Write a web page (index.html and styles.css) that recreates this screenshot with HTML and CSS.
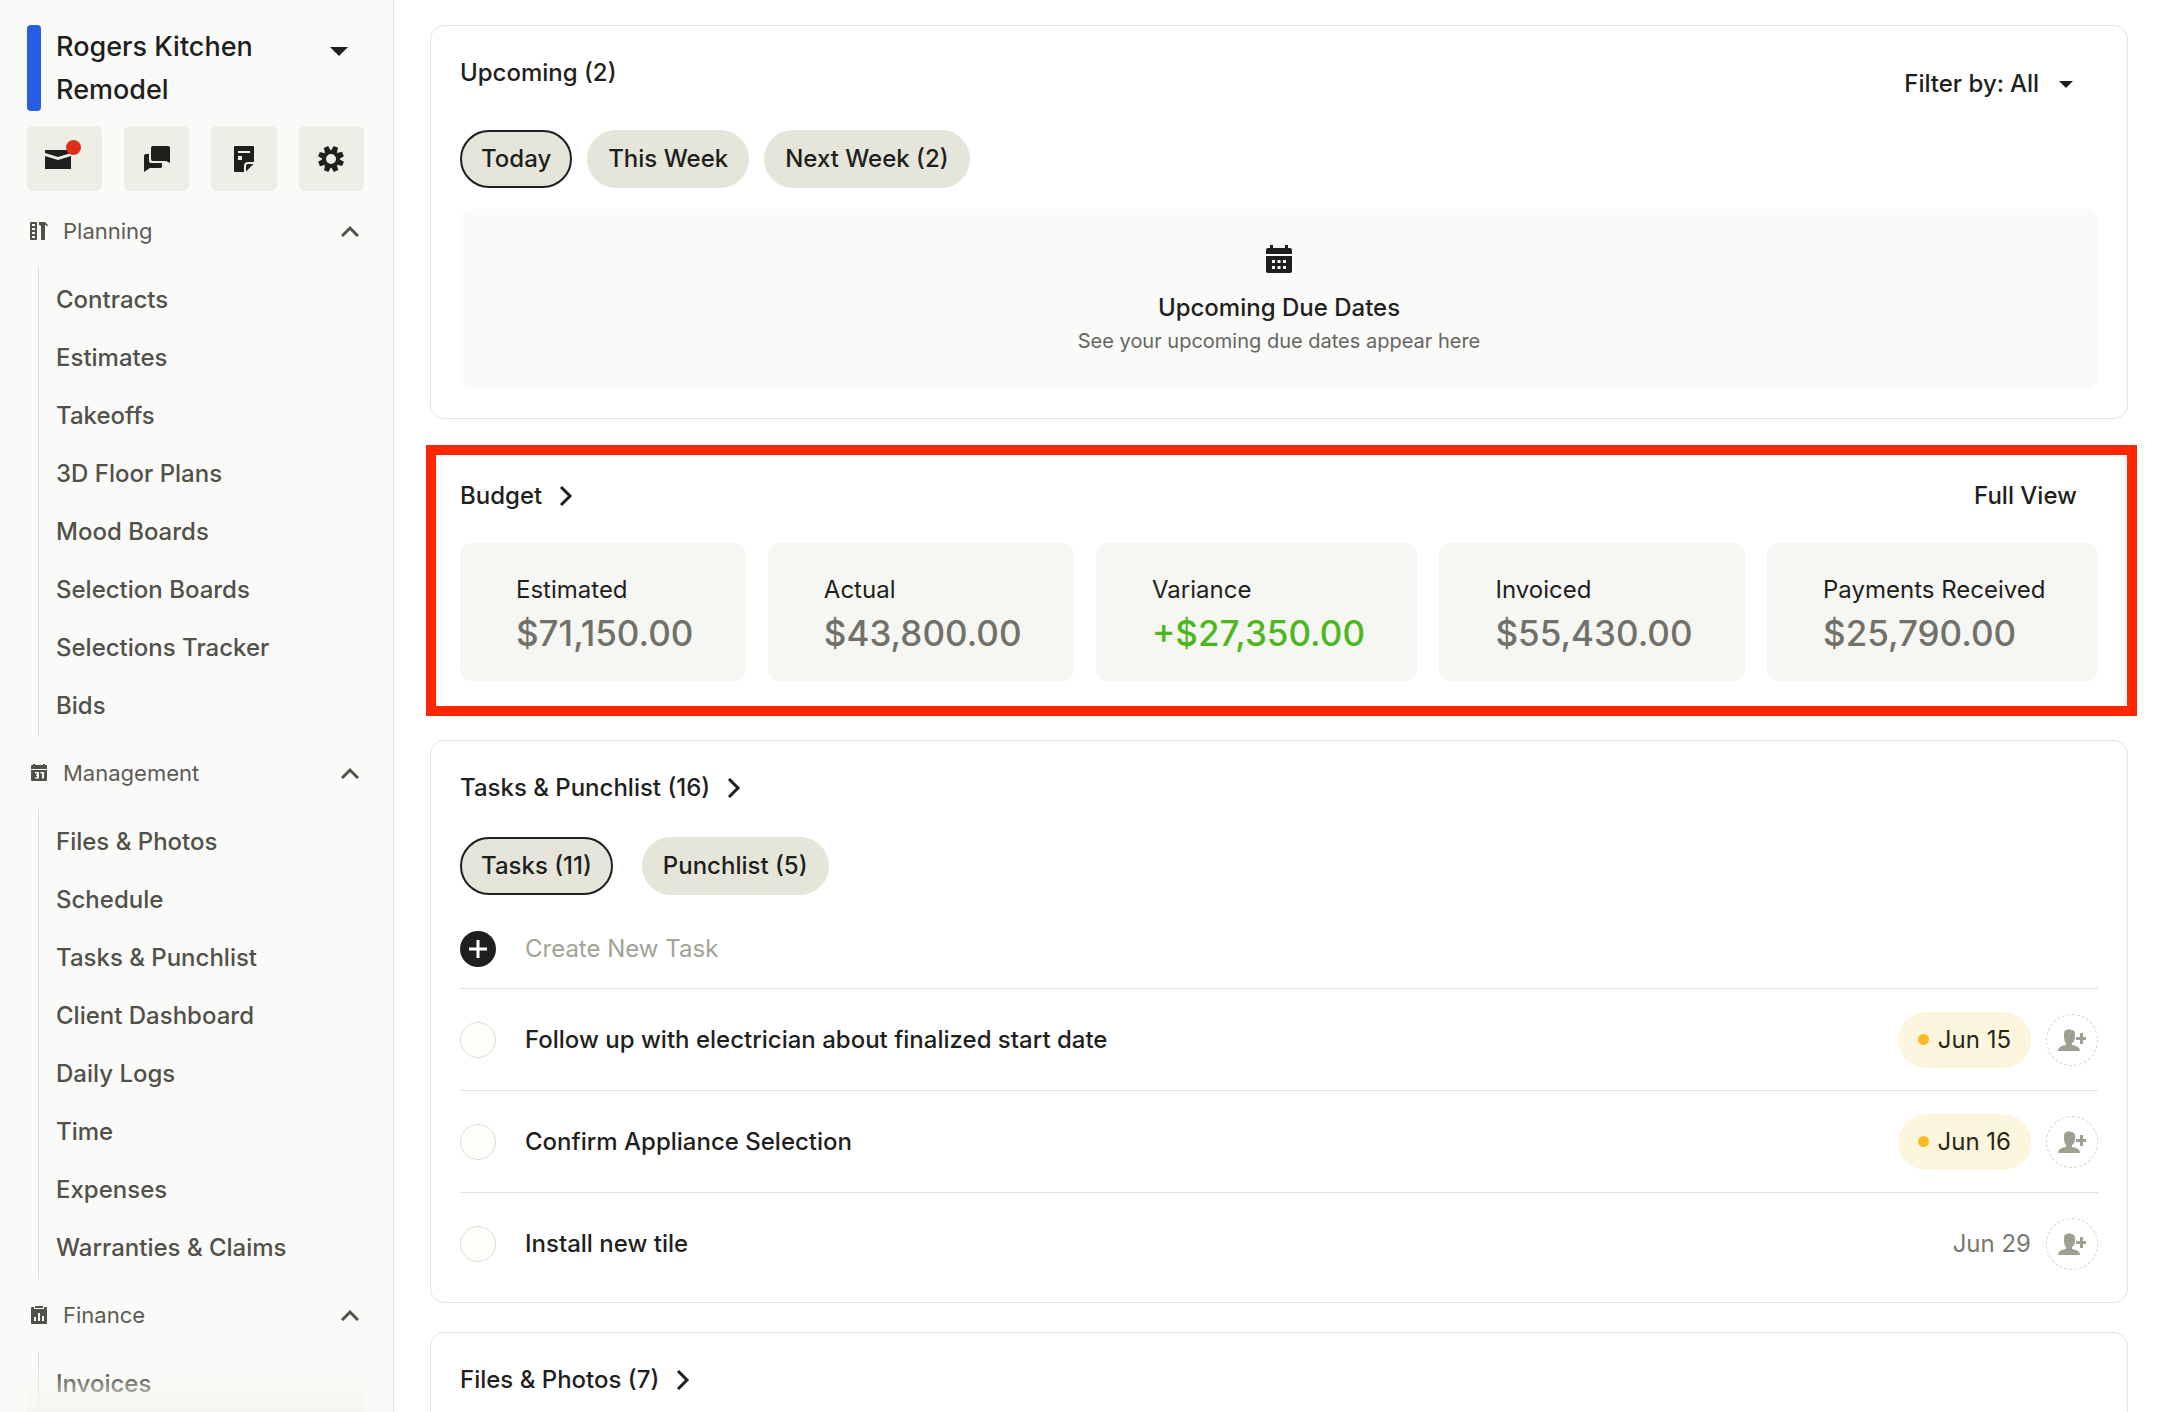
FILE: index.html
```html
<!DOCTYPE html>
<html lang="en">
<head>
    <meta charset="UTF-8">
    <meta name="viewport" content="width=device-width, initial-scale=1.0">
    <title>Rogers Kitchen Remodel</title>
    <link rel="stylesheet" href="styles.css">
</head>
<body>
    <aside class="sidebar">
        <button class="project">
            <span class="project-color"></span>
            <span class="project-name">Rogers Kitchen Remodel</span>
            <svg class="project-caret" width="18" height="10" viewBox="0 0 18 10"><path d="M0 0h18L9 9z"/></svg>
        </button>
        <div class="tools">
            <button class="tool tool-mail" aria-label="Messages">
                <svg width="26" height="26" viewBox="0 0 26 26"><path d="M0 4h26v3l-13 4L0 7z"/><path d="M0 10l13 4 13-4v13H0z"/></svg>
                <span class="badge"></span>
            </button>
            <button class="tool" aria-label="Chat">
                <svg width="26" height="26" viewBox="0 0 26 26"><path d="M9 0h15q2 0 2 2v15l-4-2H9q-2 0-2-2V2q0-2 2-2z"/><path d="M5 8v7q0 2 2 2h11v4q0 1-2 1H6l-6 4V10q0-2 2-2z"/></svg>
            </button>
            <button class="tool" aria-label="Notes">
                <svg width="20" height="26" viewBox="0 0 20 26"><path fill-rule="evenodd" d="M1 0h18q1 0 1 1v15h-6q-4 0-4 4v6H1q-1 0-1-1V1q0-1 1-1zM4 5v2h12V5zM4 10v4h4v-4z"/><path d="M12 25.500V20q0-2 2-2h5.500z"/></svg>
            </button>
            <button class="tool" aria-label="Settings">
                <svg width="26" height="26" viewBox="0 0 26 26"><g id="teeth" transform="rotate(22 13 13)"><path d="M10 5l.6-5h4.800L16 5z" id="tooth"/><use href="#tooth" transform="rotate(45 13 13)"/><use href="#tooth" transform="rotate(90 13 13)"/><use href="#tooth" transform="rotate(135 13 13)"/></g><use href="#teeth" transform="rotate(180 13 13)"/><circle cx="13" cy="13" r="7" fill="none" stroke="#1f1f1d" stroke-width="4"/></svg>
            </button>
        </div>
        <nav>
            <section>
                <button class="nav-head">
                    <svg class="nav-icon" width="18" height="18" viewBox="0 0 18 18"><path fill-rule="evenodd" d="M1 0h5q1 0 1 1v16q0 1-1 1H1q-1 0-1-1V1q0-1 1-1zM2 2v2h3V2zM2 6v2h3V6zM2 10v2h3v-2zM2 14v2h3v-2z"/><path d="M9 0h6l3 3v1l-3-1v15h-4V4L9 3z"/></svg>
                    <span>Planning</span>
                    <svg class="nav-chevron" width="18" height="12" viewBox="0 0 18 12"><path d="M1 11l8-8 8 8"/></svg>
                </button>
                <ul class="nav-list">
                    <li><a href="#">Contracts</a></li>
                    <li><a href="#">Estimates</a></li>
                    <li><a href="#">Takeoffs</a></li>
                    <li><a href="#">3D Floor Plans</a></li>
                    <li><a href="#">Mood Boards</a></li>
                    <li><a href="#">Selection Boards</a></li>
                    <li><a href="#">Selections Tracker</a></li>
                    <li><a href="#">Bids</a></li>
                </ul>
            </section>
            <section>
                <button class="nav-head">
                    <svg class="nav-icon" width="18" height="18" viewBox="0 0 18 18"><path d="M1 5V2q0-1 1-1h1V0h2v1h8V0h2v1h1q1 0 1 1v3z"/><path fill-rule="evenodd" d="M1 6h16v10q0 1-1 1H2q-1 0-1-1zM5 8v1.500h2v1.200H6v1.200h1v1.300H5v1.300h4V8zM10.500 8v1.500H12v5h2V8z"/></svg>
                    <span>Management</span>
                    <svg class="nav-chevron" width="18" height="12" viewBox="0 0 18 12"><path d="M1 11l8-8 8 8"/></svg>
                </button>
                <ul class="nav-list">
                    <li><a href="#">Files &amp; Photos</a></li>
                    <li><a href="#">Schedule</a></li>
                    <li><a href="#">Tasks &amp; Punchlist</a></li>
                    <li><a href="#">Client Dashboard</a></li>
                    <li><a href="#">Daily Logs</a></li>
                    <li><a href="#">Time</a></li>
                    <li><a href="#">Expenses</a></li>
                    <li><a href="#">Warranties &amp; Claims</a></li>
                </ul>
            </section>
            <section>
                <button class="nav-head">
                    <svg class="nav-icon" width="18" height="18" viewBox="0 0 18 18"><path d="M5 0h8v2H5z"/><path fill-rule="evenodd" d="M2 1h2v2h10V1h2q1 0 1 1v15q0 1-1 1H2q-1 0-1-1V2q0-1 1-1zM4 11v4h2v-4zM8 7v8h2V7zM12 10v5h2v-5z"/></svg>
                    <span>Finance</span>
                    <svg class="nav-chevron" width="18" height="12" viewBox="0 0 18 12"><path d="M1 11l8-8 8 8"/></svg>
                </button>
                <ul class="nav-list">
                    <li><a href="#">Invoices</a></li>
                </ul>
            </section>
        </nav>
        <div class="fade"></div>
    </aside>

    <main class="main">
        <section class="card">
            <div class="card-head">
                <h2>Upcoming (2)</h2>
                <div class="filter">
                    <label for="filter">Filter by:</label>
                    <select id="filter">
                        <option>All</option>
                    </select>
                    <svg width="14" height="7" viewBox="0 0 14 7"><path d="M0 0h14L7 7z"/></svg>
                </div>
            </div>
            <div class="tabs">
                <button class="tab active">Today</button>
                <button class="tab">This Week</button>
                <button class="tab">Next Week (2)</button>
            </div>
            <div class="empty">
                <svg width="26" height="28" viewBox="0 0 26 28"><path d="M0 9V5q0-2 2-2h2V0h3v3h12V0h3v3h2q2 0 2 2v4z"/><path fill-rule="evenodd" d="M0 11h26v15q0 2-2 2H2q-2 0-2-2zM6 15v3h3v-3zM11.500 15v3h3v-3zM17 15v3h3v-3zM6 21v3h3v-3zM11.500 21v3h3v-3zM17 21v3h3v-3z"/></svg>
                <h3>Upcoming Due Dates</h3>
                <p>See your upcoming due dates appear here</p>
            </div>
        </section>

        <section class="card budget">
            <div class="card-head">
                <h2>Budget <svg class="more" width="14" height="22" viewBox="0 0 14 22"><path d="M2 2l9 9-9 9"/></svg></h2>
                <a class="full-view" href="#">Full View</a>
            </div>
            <dl class="stats">
                <div class="stat"><dt>Estimated</dt><dd>$71,150.00</dd></div>
                <div class="stat"><dt>Actual</dt><dd>$43,800.00</dd></div>
                <div class="stat"><dt>Variance</dt><dd class="positive">+$27,350.00</dd></div>
                <div class="stat"><dt>Invoiced</dt><dd>$55,430.00</dd></div>
                <div class="stat"><dt>Payments Received</dt><dd>$25,790.00</dd></div>
            </dl>
        </section>

        <section class="card tasks-card">
            <div class="card-head">
                <h2>Tasks &amp; Punchlist (16) <svg class="more" width="14" height="22" viewBox="0 0 14 22"><path d="M2 2l9 9-9 9"/></svg></h2>
            </div>
            <div class="tabs tabs-wide">
                <button class="tab active">Tasks (11)</button>
                <button class="tab">Punchlist (5)</button>
            </div>
            <form class="new-task">
                <button class="add" type="button" aria-label="Add task">
                    <svg width="36" height="36" viewBox="0 0 36 36"><circle cx="18" cy="18" r="18"/><path d="M18 9v18M9 18h18" stroke="#fff" stroke-width="3"/></svg>
                </button>
                <input type="text" placeholder="Create New Task" aria-label="Create New Task">
            </form>
            <ul class="tasks">
                <li class="task">
                    <input type="checkbox" id="task1">
                    <label for="task1">Follow up with electrician about finalized start date</label>
                    <span class="due soon">Jun 15</span>
                    <button class="assign" aria-label="Assign">
                        <svg width="28" height="22" viewBox="0 0 28 22"><path d="M6 5q0-4 3-4l2-1 2 1q4 0 4 4v3q0 4-3 6v2q8 1 8 6H0q0-5 8-6v-2q-2-2-2-6z"/><path d="M22 4h3v4h4v3h-4v4h-3v-4h-4V8h4z"/></svg>
                    </button>
                </li>
                <li class="task">
                    <input type="checkbox" id="task2">
                    <label for="task2">Confirm Appliance Selection</label>
                    <span class="due soon">Jun 16</span>
                    <button class="assign" aria-label="Assign">
                        <svg width="28" height="22" viewBox="0 0 28 22"><path d="M6 5q0-4 3-4l2-1 2 1q4 0 4 4v3q0 4-3 6v2q8 1 8 6H0q0-5 8-6v-2q-2-2-2-6z"/><path d="M22 4h3v4h4v3h-4v4h-3v-4h-4V8h4z"/></svg>
                    </button>
                </li>
                <li class="task">
                    <input type="checkbox" id="task3">
                    <label for="task3">Install new tile</label>
                    <span class="due">Jun 29</span>
                    <button class="assign" aria-label="Assign">
                        <svg width="28" height="22" viewBox="0 0 28 22"><path d="M6 5q0-4 3-4l2-1 2 1q4 0 4 4v3q0 4-3 6v2q8 1 8 6H0q0-5 8-6v-2q-2-2-2-6z"/><path d="M22 4h3v4h4v3h-4v4h-3v-4h-4V8h4z"/></svg>
                    </button>
                </li>
            </ul>
        </section>

        <section class="card">
            <div class="card-head">
                <h2>Files &amp; Photos (7) <svg class="more" width="14" height="22" viewBox="0 0 14 22"><path d="M2 2l9 9-9 9"/></svg></h2>
            </div>
        </section>
    </main>
</body>
</html>
```

FILE: styles.css
```css
* {
    box-sizing: border-box;
}
body {
    display: flex;
    height: 100vh;
    margin: 0;
    overflow: hidden;
    font-family: Inter, "Liberation Sans", sans-serif;
    font-size: 24px;
    line-height: 30px;
    color: #1f1f1d;
    background: #fff;
}
h2, h3, p, ul, dl, dd {
    margin: 0;
    padding: 0;
}
ul {
    list-style: none;
}
a {
    color: inherit;
    text-decoration: none;
}
button, input, select {
    margin: 0;
    padding: 0;
    border: 0;
    background: none;
    font: inherit;
    color: inherit;
}
svg {
    flex: none;
    fill: #1f1f1d;
}

/* sidebar */
.sidebar {
    position: relative;
    flex: none;
    width: 394px;
    padding: 25px 29px 0 27px;
    overflow: hidden;
    background: #fafaf8;
    border-right: 1px solid #e6e6e4;
}
.project {
    display: flex;
    width: 100%;
    text-align: left;
}
.project-color {
    flex: none;
    align-self: stretch;
    width: 14px;
    border-radius: 4px;
    background: #265fe6;
}
.project-name {
    flex: 1;
    padding: 0 32px 0 15px;
    font-size: 27px;
    font-weight: 500;
    line-height: 43px;
}
.project-caret {
    margin: 22px 16px 0 0;
}
.tools {
    display: flex;
    gap: 22px;
    margin-top: 15px;
}
.tool {
    display: flex;
    flex: 1;
    align-items: center;
    justify-content: center;
    height: 65px;
    border-radius: 6px;
    background: #eeeee7;
}
.tool-mail {
    position: relative;
    flex: none;
    width: 75px;
    padding-right: 14px;
}
.badge {
    position: absolute;
    top: 14px;
    left: 39px;
    width: 15px;
    height: 15px;
    border-radius: 50%;
    background: #dc3018;
}
nav {
    margin-top: 4px;
}
.nav-head {
    display: flex;
    align-items: center;
    width: 100%;
    height: 72px;
    padding: 0 5px 0 3px;
    font-size: 22px;
    color: #5c5c55;
}
.nav-head span {
    flex: 1;
    padding-left: 15px;
    text-align: left;
}
.nav-icon {
    fill: #51514a;
}
.nav-chevron {
    fill: none;
    stroke: #51514a;
    stroke-width: 3;
}
.nav-list {
    margin-left: 11px;
    padding: 4px 0 2px 17px;
    border-left: 1px solid #dededa;
    font-weight: 500;
    line-height: 58px;
    color: #51514a;
}
.nav-list a {
    display: block;
}
.fade {
    position: absolute;
    right: 29px;
    bottom: 0;
    left: 27px;
    height: 40px;
    background: linear-gradient(rgba(246, 246, 241, 0), #f6f6f1);
}

/* cards */
.main {
    flex: 1;
    display: flex;
    flex-direction: column;
    gap: 29px;
    min-width: 0;
    padding: 25px 36px 0;
}
.card {
    flex: none;
    padding: 29px;
    border: 1px solid #e4e4e2;
    border-radius: 14px;
}
.card-head {
    display: flex;
    justify-content: space-between;
    height: 36px;
}
h2, h3 {
    font-size: 24px;
    font-weight: 500;
    line-height: 36px;
}
h2 {
    display: flex;
    align-items: center;
    gap: 17px;
}
.more {
    fill: none;
    stroke: #1f1f1d;
    stroke-width: 3;
}
.filter {
    display: flex;
    align-items: center;
    gap: 6px;
    padding: 22px 25px 0 0;
    font-weight: 500;
}
.filter select {
    appearance: none;
}
.filter svg {
    margin-left: 13px;
}
.tabs {
    display: flex;
    gap: 15px;
    margin-top: 39px;
}
.tabs-wide {
    gap: 29px;
    margin-top: 31px;
}
.tab {
    height: 58px;
    padding: 0 19px;
    border: 2px solid #e6e5da;
    border-radius: 29px;
    background: #e6e5da;
    font-weight: 500;
}
.tab.active {
    border-color: #1f1f1d;
}
.empty {
    display: flex;
    flex-direction: column;
    align-items: center;
    margin-top: 21px;
    padding: 36px 20px 33px;
    border-radius: 12px;
    background: #fafaf8;
}
.empty h3 {
    margin-top: 17px;
}
.empty p {
    font-size: 20px;
    color: #66665f;
}

/* budget */
.budget {
    position: relative;
}
.budget::after {
    content: "";
    position: absolute;
    inset: -4px -10px -6px -5px;
    border: 10px solid #ff2600;
    pointer-events: none;
}
.full-view {
    padding-right: 21px;
    font-weight: 500;
    line-height: 36px;
}
.stats {
    display: flex;
    gap: 22px;
    margin-top: 29px;
}
.stat {
    flex: 1 1 auto;
    height: 138px;
    padding: 32px 50px 0 56px;
    border-radius: 12px;
    background: #f6f6f3;
    white-space: nowrap;
}
.stat dd {
    margin-top: 6px;
    font-size: 35px;
    font-weight: 500;
    line-height: 44px;
    color: #71716a;
}
.stat .positive {
    color: #4db81e;
}

/* tasks */
.tasks-card {
    padding-bottom: 7px;
}
.new-task {
    display: flex;
    align-items: center;
    gap: 29px;
    height: 94px;
    padding-top: 14px;
    border-bottom: 1px solid #e2e2e0;
}
.add {
    display: flex;
}
.new-task input {
    flex: 1;
    outline: 0;
}
.new-task input::placeholder {
    color: #a3a395;
}
.task {
    display: flex;
    align-items: center;
    height: 102px;
    border-bottom: 1px solid #e2e2e0;
}
.task:last-child {
    border-bottom: 0;
}
.task input {
    appearance: none;
    width: 36px;
    height: 36px;
    border: 1px solid #dcdcd4;
    border-radius: 50%;
    background: #fefefb;
}
.task label {
    flex: 1;
    padding-left: 29px;
    font-weight: 500;
}
.due {
    color: #777770;
}
.due.soon {
    display: flex;
    align-items: center;
    gap: 9px;
    height: 56px;
    padding: 0 20px;
    border-radius: 28px;
    background: #fdf6df;
    color: #2b2614;
}
.due.soon::before {
    content: "";
    width: 11px;
    height: 11px;
    border-radius: 50%;
    background: #fbb924;
}
.assign {
    display: flex;
    align-items: center;
    justify-content: center;
    width: 52px;
    height: 52px;
    margin-left: 15px;
    border: 1px dashed #d2d2c8;
    border-radius: 50%;
}
.assign svg {
    fill: #a0a090;
}
```
